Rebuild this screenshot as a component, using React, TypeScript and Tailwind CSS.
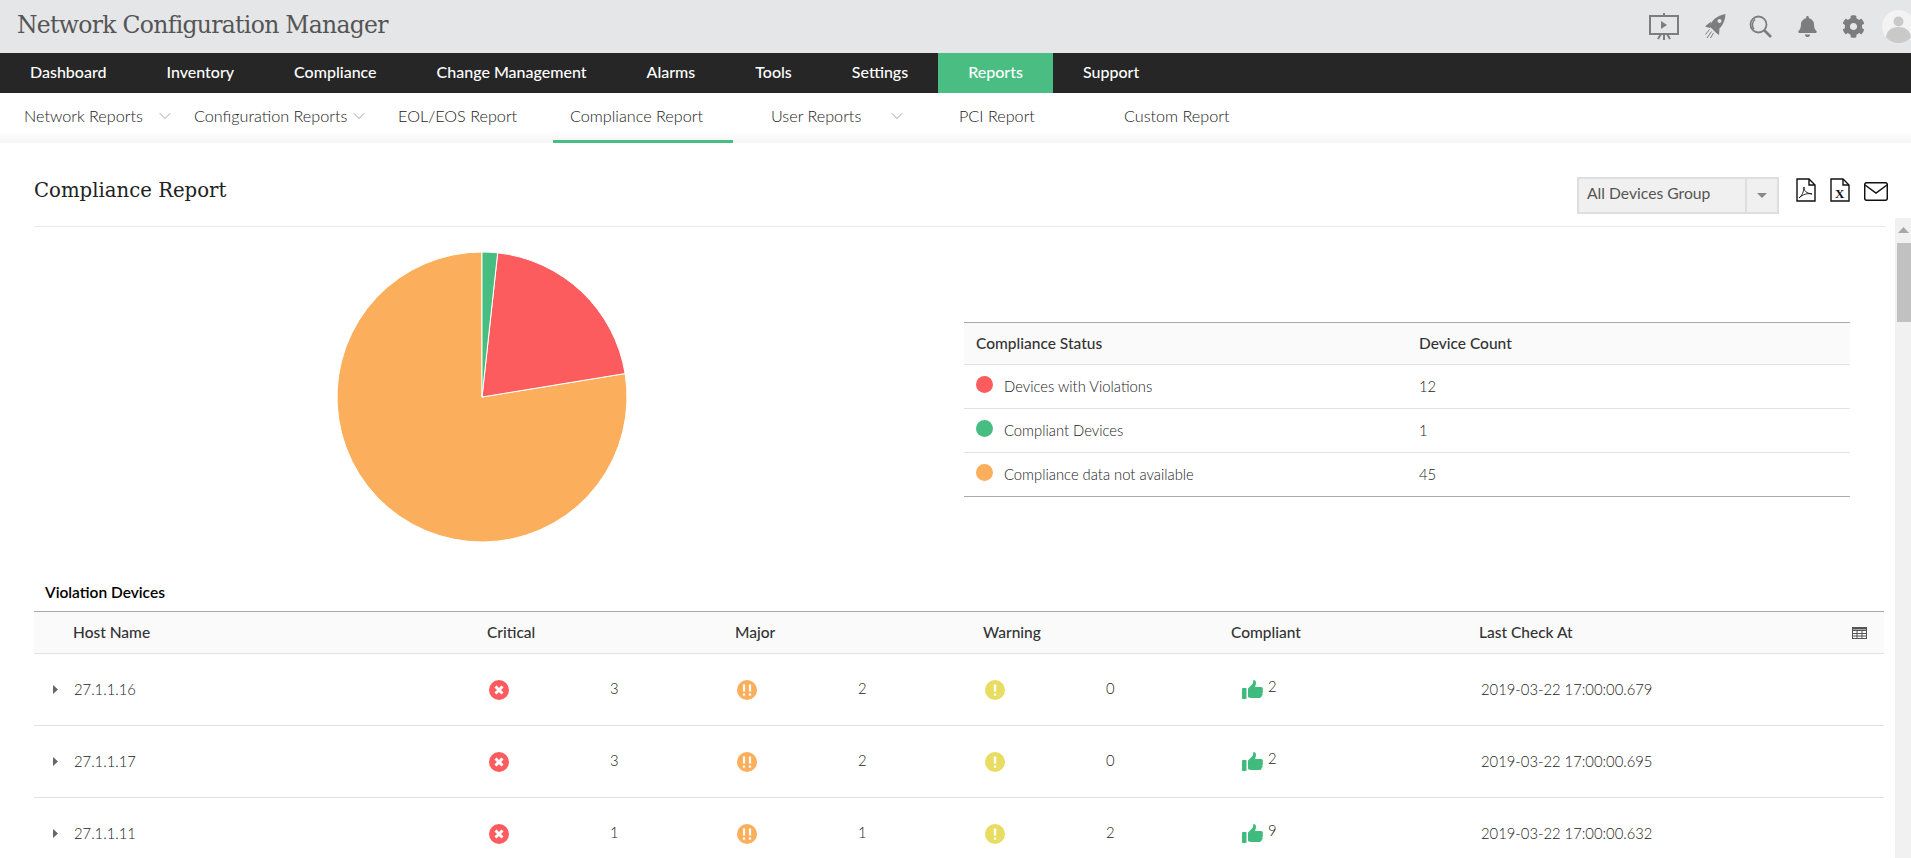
import { ChevronDown } from "lucide-react";
import { FaBell, FaCog } from "react-icons/fa";

const navItems = ["Dashboard", "Inventory", "Compliance", "Change Management", "Alarms", "Tools", "Settings", "Reports", "Support"];

const subItems = [
  { label: "Network Reports", w: "w-[170px]", pl: "pl-[17px]", chevron: "ml-[12px]" },
  { label: "Configuration Reports", w: "w-[204px]", pl: "pl-[17px]", chevron: "ml-[2px]" },
  { label: "EOL/EOS Report", w: "w-[172px]", pl: "pl-[17px]" },
  { label: "Compliance Report", w: "w-[201px]", pl: "pl-[17px]", active: true },
  { label: "User Reports", w: "w-[188px]", pl: "pl-[17px]", chevron: "ml-[26px]" },
  { label: "PCI Report", w: "w-[165px]", pl: "pl-[17px]" },
  { label: "Custom Report", w: "w-[160px]", pl: "pl-[17px]" },
];

const statusRows = [
  { label: "Devices with Violations", color: "bg-[#fd5c5e]", count: 12 },
  { label: "Compliant Devices", color: "bg-[#48bd81]", count: 1 },
  { label: "Compliance data not available", color: "bg-[#fbae5b]", count: 45 },
];

const devices = [
  { host: "27.1.1.16", critical: 3, major: 2, warning: 0, compliant: 2, last: "2019-03-22 17:00:00.679" },
  { host: "27.1.1.17", critical: 3, major: 2, warning: 0, compliant: 2, last: "2019-03-22 17:00:00.695" },
  { host: "27.1.1.11", critical: 1, major: 1, warning: 2, compliant: 9, last: "2019-03-22 17:00:00.632" },
];

function PresentationIcon() {
  return (
    <svg width="30" height="27" viewBox="0 0 30 27" fill="none" stroke="#7b7d7f" strokeWidth="2">
      <rect x="1" y="3" width="28" height="18" />
      <path d="M15 0v3M15 21v6M9 26l3-5M21 26l-3-5" />
      <path d="M12 8l6 4-6 4z" fill="#7b7d7f" stroke="none" />
    </svg>
  );
}

function RocketIcon() {
  return (
    <svg width="22" height="25" viewBox="0 0 22 25" fill="#7b7d7f">
      <path d="M21.500 0C13 1.500 7.500 6.500 5.500 12.500l5.500 5C16.500 15 21 9 21.500 0z" />
      <path d="M7 7.500L1 12.500l5 1.500zM15.500 14.500L15 21l-4.500-3.500z" />
      <circle cx="15.500" cy="7" r="2" fill="#e5e6e8" />
      <path d="M5.500 15.500l-4 5M7.500 17.500l-4.500 6.500M9.500 19l-3 5" stroke="#7b7d7f" strokeWidth="1" fill="none" />
    </svg>
  );
}

function SearchIcon() {
  return (
    <svg width="23" height="23" viewBox="0 0 23 23" fill="none" stroke="#7b7d7f">
      <circle cx="9.5" cy="9.5" r="8" strokeWidth="1.8" />
      <path d="M15 15l7 7" strokeWidth="2.6" />
      <path d="M5 14c-2.5-3-2-7 1-9.5" strokeWidth="1.6" />
    </svg>
  );
}

function Avatar() {
  return (
    <svg width="33" height="33" viewBox="0 0 33 33" className="shrink-0">
      <circle cx="16.5" cy="16.5" r="16.5" fill="#f3f3f3" />
      <circle cx="16.5" cy="11.5" r="5" fill="#c9c9c9" />
      <path d="M4 27c1-7 6-10 12.500-10S28 20 29 27c-3 4-8 6-12.500 6S7 31 4 27z" fill="#c9c9c9" />
    </svg>
  );
}

function PdfIcon() {
  return (
    <svg width="20" height="24" viewBox="0 0 20 24" fill="none" stroke="#111" strokeWidth="1.4">
      <path d="M1 1h12l6 6v16H1z" />
      <path d="M13 1v6h6" />
      <path d="M3 20c3-2 5-7 5-11 0 4 2 6 8 7-4-1-9 0-13 4z" strokeWidth="0.9" />
    </svg>
  );
}

function XlsIcon() {
  return (
    <div className="relative h-[24px] w-[20px]">
      <svg width="20" height="24" viewBox="0 0 20 24" fill="none" stroke="#111" strokeWidth="1.4">
        <path d="M1 1h12l6 6v16H1z" />
        <path d="M13 1v6h6" />
      </svg>
      <span className="absolute top-[9px] left-[5px] text-[13px] leading-[13px] font-bold text-[#111] [font-family:'Liberation_Serif',serif]">
        X
      </span>
    </div>
  );
}

function MailIcon() {
  return (
    <svg width="24" height="19" viewBox="0 0 24 19" fill="none" stroke="#111" strokeWidth="1.5">
      <rect x="0.7" y="0.7" width="22.600" height="17.600" rx="2" />
      <path d="M1 3l11 8 11-8" />
    </svg>
  );
}

function TableIcon() {
  return (
    <svg width="15" height="12" viewBox="0 0 15 12" fill="none" stroke="#555" strokeWidth="1">
      <rect x="0.5" y="0.5" width="14" height="11" />
      <path d="M0.5 3.500h14M0.500 6.500h14M0.500 9h14M5 3.500V11.500M10 3.500V11.500" />
      <path d="M0.500 1.500h14" strokeWidth="2" />
    </svg>
  );
}

function ThumbIcon() {
  return (
    <svg width="21" height="19" viewBox="0 0 21 19" fill="#3fbb7d" className="shrink-0">
      <rect x="0" y="8" width="4.500" height="11" rx="0.800" />
      <path d="M6 8.500L10.500 4c.6-1.500.7-3 1-4 1.600 0 2.500 1.300 2.500 3 0 1.500-.5 2.700-1 4h6c1.200 0 2 .8 2 1.800 0 .6-.3 1.100-.7 1.500.4.300.7.800.7 1.400 0 .7-.4 1.200-.9 1.500.3.300.5.700.5 1.200 0 .8-.5 1.300-1.100 1.600.1.900-.5 2-1.900 2H9c-1.500 0-3-1-3-1z" />
    </svg>
  );
}

function CriticalIcon() {
  return (
    <svg width="20" height="20" viewBox="0 0 20 20" className="shrink-0">
      <circle cx="10" cy="10" r="10" fill="#fd5c5e" />
      <path d="M6.500 6.500l7 7M13.500 6.500l-7 7" stroke="#fff" strokeWidth="3" />
    </svg>
  );
}

function MajorIcon() {
  return (
    <svg width="20" height="20" viewBox="0 0 20 20" className="shrink-0">
      <circle cx="10" cy="10" r="10" fill="#fbae5b" />
      <path d="M7 4.500v7M13 4.500v7" stroke="#fff" strokeWidth="2.200" />
      <path d="M7 13.500v2.200M13 13.500v2.200" stroke="#fff" strokeWidth="2.200" />
    </svg>
  );
}

function WarningIcon() {
  return (
    <svg width="20" height="20" viewBox="0 0 20 20" className="shrink-0">
      <circle cx="10" cy="10" r="10" fill="#e9dc62" />
      <path d="M10 4.500v7M10 13.500v2.200" stroke="#fff" strokeWidth="2.400" />
    </svg>
  );
}

function polar(deg: number) {
  const r = 145;
  const a = (deg * Math.PI) / 180;
  return `${146 + r * Math.sin(a)} ${146 - r * Math.cos(a)}`;
}

function slice(from: number, to: number) {
  const large = to - from > 180 ? 1 : 0;
  return `M146 146L${polar(from)}A145 145 0 ${large} 1 ${polar(to)}Z`;
}

function Pie() {
  return (
    <svg width="292" height="292" viewBox="0 0 292 292">
      <path d={slice(80.7, 360)} fill="#fbae5b" stroke="#fff" />
      <path d={slice(6.2, 80.7)} fill="#fd5c5e" stroke="#fff" />
      <path d={slice(0, 6.2)} fill="#48bd81" stroke="#fff" />
    </svg>
  );
}

function Severity({ icon, count }: { icon: React.ReactNode; count: number }) {
  return (
    <div className="flex items-center pl-[2px]">
      {icon}
      <span className="ml-[101px] -translate-y-px">{count}</span>
    </div>
  );
}

export default function App() {
  return (
    <div className="flex h-[858px] flex-col overflow-hidden bg-white text-[#222] [font-family:Lato,'Open_Sans',sans-serif]">
      <header className="flex h-[53px] shrink-0 items-center justify-between bg-[#e5e6e8]">
        <h1 className="-translate-y-[1px] pl-[17px] text-[23.5px] leading-none font-normal tracking-[-0.7px] text-[#555] [font-family:'DejaVu_Serif',serif]">
          Network Configuration Manager
        </h1>
        <div className="flex translate-x-[4px] items-center">
          <PresentationIcon />
          <div className="ml-[25px]">
            <RocketIcon />
          </div>
          <div className="ml-[23px]">
            <SearchIcon />
          </div>
          <FaBell className="ml-[25px] text-[21px] text-[#7b7d7f]" />
          <FaCog className="ml-[24px] text-[23px] text-[#7b7d7f]" />
          <div className="ml-[17px]">
            <Avatar />
          </div>
        </div>
      </header>

      <nav className="flex h-[40px] shrink-0 bg-[#262626] pb-[2px] text-[16px] font-medium text-white">
        {navItems.map((item) => (
          <div key={item} className={`-mb-[2px] flex items-center px-[30px] pb-[2px] ${item === "Reports" ? "bg-[#4abe82]" : ""}`}>
            {item}
          </div>
        ))}
      </nav>

      <div className="flex h-[50px] shrink-0 bg-gradient-to-b from-white from-75% to-[#f5f5f5] pl-[7px] text-[16.2px] font-light text-[#222]">
        {subItems.map((item) => (
          <div key={item.label} className={`relative flex items-center pb-[4px] whitespace-nowrap ${item.w} ${item.pl}`}>
            {item.label}
            {item.chevron && <ChevronDown className={`${item.chevron} text-[#777]`} size={20} strokeWidth={0.8} />}
            {item.active && <div className="absolute bottom-0 left-0 h-[3px] w-[180px] bg-[#48bd81]" />}
          </div>
        ))}
      </div>

      <main className="relative flex-1">
        <div className="mr-[25px] ml-[34px] flex h-[84px] items-start justify-between border-b border-[#e8e8e8]">
          <h2 className="mt-[36px] text-[19.7px] leading-[24px] font-normal text-[#222] [font-family:'DejaVu_Serif',serif]">
            Compliance Report
          </h2>
          <div className="mt-[34px] -mr-[2px] flex items-start">
            <div className="flex h-[37px] w-[202px] border-2 border-[#dedede] bg-[#f0f0f0] text-[15.700px] text-[#555]">
              <div className="flex w-[168px] items-center border-r-2 border-[#dedede] pb-[3px] pl-[8px]">All Devices Group</div>
              <div className="flex flex-1 items-center justify-center">
                <svg width="10" height="5" viewBox="0 0 10 5">
                  <path d="M0 0h10L5 5z" fill="#888" />
                </svg>
              </div>
            </div>
            <div className="mt-[1px] ml-[17px]">
              <PdfIcon />
            </div>
            <div className="mt-[1px] ml-[14px]">
              <XlsIcon />
            </div>
            <div className="mt-[5px] ml-[14px]">
              <MailIcon />
            </div>
          </div>
        </div>

        <div className="mr-[27px] ml-[34px]">
          <div className="flex h-[348px] items-start">
            <div className="w-[930px] pt-[24px] pl-[302px]">
              <Pie />
            </div>
            <div className="mt-[95px] w-[886px]">
              <div className="grid h-[43px] grid-cols-[443px_1fr] items-center border-t border-b border-t-[#aaa] border-b-[#e2e2e2] bg-[#fafafa] pl-[12px] text-[15.5px] font-medium text-[#333]">
                <span>Compliance Status</span>
                <span>Device Count</span>
              </div>
              {statusRows.map((row, i) => (
                <div
                  key={row.label}
                  className={`grid h-[44px] grid-cols-[443px_1fr] items-center border-b pl-[12px] text-[14.8px] font-light ${
                    i === 2 ? "border-[#aaa]" : "border-[#e2e2e2]"
                  }`}
                >
                  <span className="flex items-center">
                    <span className={`mr-[11px] h-[17px] w-[17px] -translate-y-[2px] rounded-full ${row.color}`} />
                    {row.label}
                  </span>
                  <span>{row.count}</span>
                </div>
              ))}
            </div>
          </div>

          <div className="flex h-[36px] items-center pl-[11px] text-[15.5px] font-semibold text-black">Violation Devices</div>

          <div className="grid h-[43px] grid-cols-[453px_248px_248px_248px_248px_1fr] items-center border-t border-b border-t-[#aaa] border-b-[#e2e2e2] bg-[#fafafa] text-[15.5px] font-medium text-[#333]">
            <span className="pl-[39px]">Host Name</span>
            <span>Critical</span>
            <span>Major</span>
            <span>Warning</span>
            <span>Compliant</span>
            <span className="flex items-center justify-between pr-[17px]">
              Last Check At
              <TableIcon />
            </span>
          </div>

          {devices.map((d) => (
            <div
              key={d.host}
              className="grid h-[72px] grid-cols-[453px_248px_248px_248px_248px_1fr] items-center border-b border-[#e2e2e2] text-[14.8px] font-light"
            >
              <span className="flex items-center pl-[19px]">
                <svg width="5" height="9" viewBox="0 0 5 9" className="mr-[16px]">
                  <path d="M0 0l5 4.500L0 9z" fill="#666" />
                </svg>
                {d.host}
              </span>
              <Severity icon={<CriticalIcon />} count={d.critical} />
              <Severity icon={<MajorIcon />} count={d.major} />
              <Severity icon={<WarningIcon />} count={d.warning} />
              <div className="flex items-center pl-[11px]">
                <ThumbIcon />
                <span className="ml-[5px] -translate-y-[3px]">{d.compliant}</span>
              </div>
              <span className="pl-[2px]">{d.last}</span>
            </div>
          ))}
        </div>

        <div className="absolute top-[75px] right-0 bottom-0 flex w-[16px] flex-col items-center bg-[#f1f1f1]">
          <svg width="11" height="6" viewBox="0 0 11 6" className="mt-[9px]">
            <path d="M0 6h11L5.500 0z" fill="#a8a8a8" />
          </svg>
          <div className="mt-[10px] ml-[2px] h-[79px] w-[14px] bg-[#c1c1c1]" />
          <svg width="11" height="6" viewBox="0 0 11 6" className="mt-auto mb-[5px]">
            <path d="M0 0h11L5.500 6z" fill="#505050" />
          </svg>
        </div>
      </main>
    </div>
  );
}
